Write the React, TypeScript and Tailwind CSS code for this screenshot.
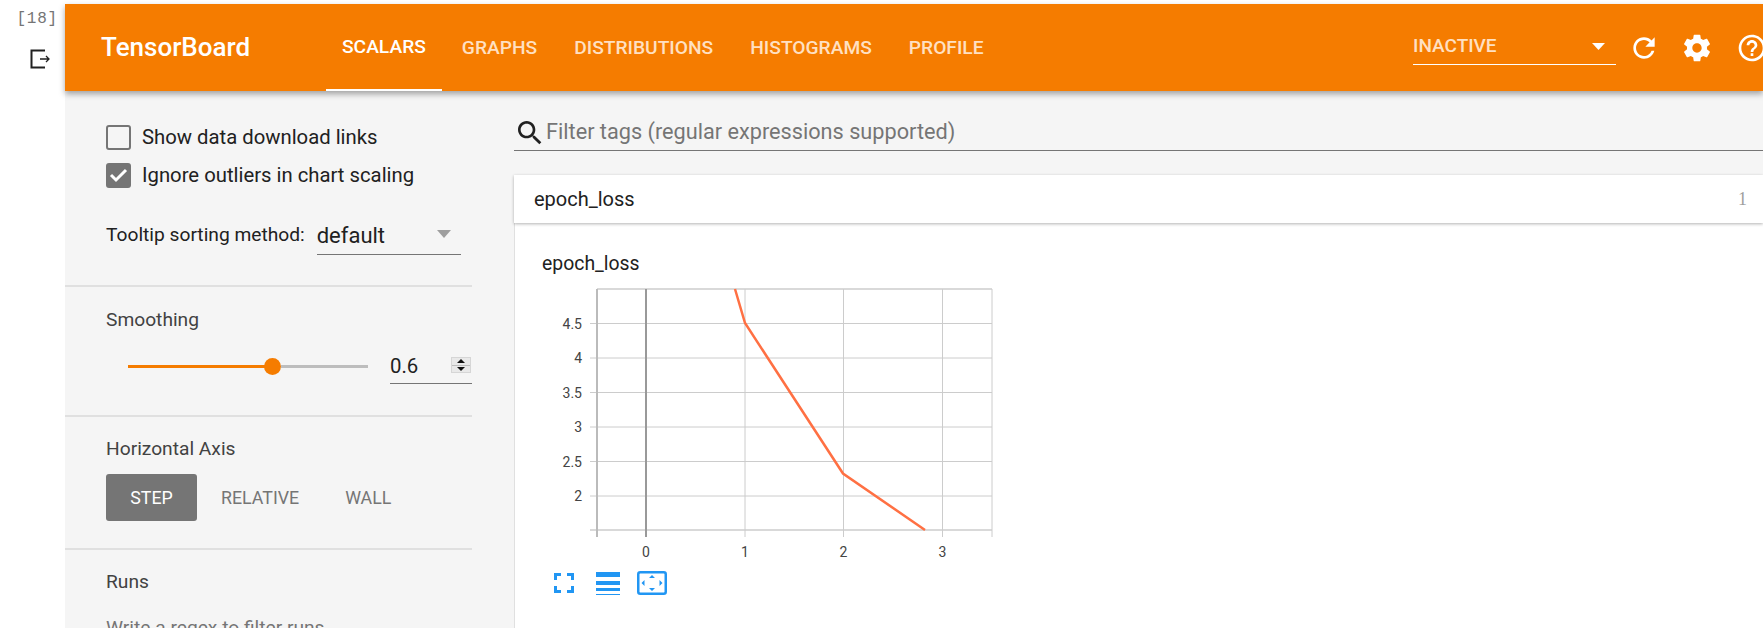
const font = { fontFamily: 'Roboto, sans-serif' };

const yTicks = [
  { label: '4.5', y: 323.5 },
  { label: '4', y: 358 },
  { label: '3.5', y: 392.5 },
  { label: '3', y: 427 },
  { label: '2.5', y: 461.5 },
  { label: '2', y: 496 },
];
const xTicks = [
  { label: '0', x: 646 },
  { label: '1', x: 745 },
  { label: '2', x: 843.5 },
  { label: '3', x: 942.5 },
];

const tabs = ['SCALARS', 'GRAPHS', 'DISTRIBUTIONS', 'HISTOGRAMS', 'PROFILE'];

// chart coordinates are page-like, shifted by the viewBox origin
const LossChart = () => (
  <svg width={460} height={280} viewBox="540 284 460 280" className="block ml-[25px]">
    <line x1={597} x2={992} y1={289} y2={289} stroke="#ccc" strokeWidth={1.5} />
    <line x1={590} x2={992} y1={530} y2={530} stroke="#ccc" strokeWidth={1.5} />
    {yTicks.map((t) => (
      <g key={t.label}>
        <line x1={590} x2={992} y1={t.y} y2={t.y} stroke="#ccc" strokeWidth={1} />
        <text x={582} y={t.y + 5} textAnchor="end" fontSize={14} fill="#444" fontFamily="Roboto">
          {t.label}
        </text>
      </g>
    ))}
    <line x1={597} x2={597} y1={289} y2={537} stroke="#bbb" strokeWidth={2} />
    <line x1={992} x2={992} y1={289} y2={537} stroke="#ccc" strokeWidth={1} />
    {xTicks.map((t) => (
      <g key={t.label}>
        <line x1={t.x} x2={t.x} y1={289} y2={537} stroke={t.x === 646 ? '#999' : '#ccc'} strokeWidth={t.x === 646 ? 2 : 1} />
        <text x={t.x} y={557} textAnchor="middle" fontSize={14} fill="#444" fontFamily="Roboto">
          {t.label}
        </text>
      </g>
    ))}
    <polyline points="735,289 745,323 843,473.5 925,530" fill="none" stroke="#ff7043" strokeWidth={2.5} />
  </svg>
);

const ChartTools = () => (
  <div className="flex items-center mt-[7px] ml-[39px] text-[#2196f3] h-[24px]">
    <svg width={20} height={20} viewBox="0 0 20 20" fill="none" stroke="currentColor" strokeWidth={3}>
      <path d="M1.5 7V1.5H7M13 1.5h5.5V7M18.500 13v5.500H13M7 18.500H1.500V13" />
    </svg>
    <svg width={24} height={23} viewBox="0 0 24 23" fill="currentColor" className="ml-[22px]">
      <rect x={0} y={0} width={24} height={5} />
      <rect x={0} y={9} width={24} height={4} />
      <rect x={0} y={16} width={24} height={3} />
      <rect x={0} y={22} width={24} height={1} />
    </svg>
    <svg width={30} height={24} viewBox="0 0 30 24" className="ml-[17px]">
      <rect x={1.25} y={1.25} width={27.5} height={21.5} rx={2} fill="none" stroke="currentColor" strokeWidth={2.5} />
      <path d="M15 4l3 3h-6zM15 20l-3-3h6zM4.500 12l3-3v6zM25.500 12l-3 3v-6z" fill="currentColor" />
    </svg>
  </div>
);

const Checkbox = ({ checked, label }: { checked?: boolean; label: string }) => (
  <div className="flex items-center h-[25px] gap-[11px]">
    {checked ? (
      <div className="w-[25px] h-[25px] rounded-[3px] bg-[#757575]">
        <svg width={25} height={25} viewBox="0 0 25 25" fill="none" stroke="#fff" strokeWidth={3}>
          <polyline points="5,12 10,17 20,7" />
        </svg>
      </div>
    ) : (
      <div className="w-[25px] h-[25px] rounded-[3px] border-2 border-[#757575]" />
    )}
    <span className="text-[20.3px] text-[#212121]">{label}</span>
  </div>
);

const Sidebar = () => (
  <aside className="w-[407px] shrink-0">
    <div className="h-[196px] border-b-2 border-[#e0e0e0] pl-[41px] pt-[34px]">
      <div className="flex flex-col gap-[13px]">
        <Checkbox label="Show data download links" />
        <Checkbox checked label="Ignore outliers in chart scaling" />
      </div>
      <div className="flex items-start mt-[29px]">
        <span className="text-[19.2px] text-[#212121] leading-[36px]">Tooltip sorting method:</span>
        <div className="ml-[12px] w-[144px] h-[38px] border-b border-[#757575] flex items-center justify-between pr-[10px]">
          <span className="text-[22px] text-[#212121]">default</span>
          <svg width={14} height={8} viewBox="0 0 14 8" className="mb-[4px]">
            <path d="M0 0h14L7 8z" fill="#9e9e9e" />
          </svg>
        </div>
      </div>
    </div>
    <div className="h-[130px] border-b-2 border-[#e0e0e0] pl-[41px] pt-[22px]">
      <div className="text-[19.2px] text-[#424242] leading-[22px]">Smoothing</div>
      <div className="flex items-center mt-[23px]">
        <div className="ml-[22px] w-[240px] flex items-center h-[20px]">
          <div className="w-[137px] h-[3px] bg-[#f57c00]" />
          <div className="w-[17px] h-[17px] rounded-full bg-[#f57c00] -ml-[1px] shrink-0" />
          <div className="flex-1 h-[3px] bg-[#bdbdbd]" />
        </div>
        <div className="ml-[22px] w-[82px] h-[30px] -mb-[5px] border-b border-[#757575] flex items-start justify-between pr-[1px]">
          <span className="text-[20.4px] text-[#212121] leading-[24px]">0.6</span>
          <div className="w-[20px] h-[16px] bg-[#e9e9e9] border border-[#d6d6d6] flex flex-col mt-[3px]">
            <div className="flex-1 flex items-center justify-center border-b border-[#bdbdbd]">
              <svg width={8} height={4} viewBox="0 0 8 4"><path d="M0 4h8L4 0z" fill="#111" /></svg>
            </div>
            <div className="flex-1 flex items-center justify-center">
              <svg width={8} height={4} viewBox="0 0 8 4"><path d="M0 0h8L4 4z" fill="#111" /></svg>
            </div>
          </div>
        </div>
      </div>
    </div>
    <div className="h-[133px] border-b-2 border-[#e0e0e0] pl-[41px] pt-[21px]">
      <div className="text-[19.2px] text-[#424242] leading-[22px]">Horizontal Axis</div>
      <div className="flex items-center mt-[14px] text-[17.8px]">
        <div className="w-[91px] h-[47px] rounded-[3px] bg-[#757575] text-[#fff] flex items-center justify-center pt-[1px]">STEP</div>
        <div className="ml-[24px] pt-[1px] text-[#757575]">RELATIVE</div>
        <div className="ml-[46px] pt-[1px] text-[#757575]">WALL</div>
      </div>
    </div>
    <div className="pl-[41px] pt-[21px]">
      <div className="text-[19.2px] text-[#424242] leading-[22px]">Runs</div>
      <div className="text-[19.2px] text-[#757575] leading-[22px] mt-[24px]">Write a regex to filter runs</div>
    </div>
  </aside>
);

export default function App() {
  return (
    <div className="flex h-[628px] w-[1763px] overflow-hidden bg-white" style={font}>
      <div className="w-[65px] shrink-0 pt-[9px]">
        <div className="text-[16px] leading-[20px] text-[#757575] text-right pr-[7px] tracking-[0.8px]" style={{ fontFamily: '"Liberation Mono", monospace' }}>
          [18]
        </div>
        <svg width={20} height={20} viewBox="0 0 20 20" fill="none" stroke="#212121" className="ml-[30px] mt-[20px]">
          <path d="M15 1.500H1.500v17H15" strokeWidth={2} />
          <path d="M10 10h9M16 7l3 3-3 3" strokeWidth={1.300} />
        </svg>
      </div>

      <div className="flex-1 min-w-0 flex flex-col pt-[4px]">
        <header className="relative z-10 h-[87px] shrink-0 bg-[#f57c00] flex items-center shadow-[0_3px_6px_rgba(0,0,0,0.35)] text-[#fff]">
          <div className="ml-[36px] w-[225px] text-[26px] font-medium">TensorBoard</div>
          <nav className="flex h-full">
            {tabs.map((tab, i) => (
              <div
                key={tab}
                className={
                  i === 0
                    ? 'flex items-center px-[16px] mr-[1.5px] pt-[1px] border-b-2 border-[#fff] text-[19.2px] font-medium'
                    : 'flex items-center px-[18.5px] pt-[1px] text-[19.2px] font-medium text-[#ffe0c2]'
                }
              >
                {tab}
              </div>
            ))}
          </nav>
          <div className="ml-auto flex items-center">
            <div className="w-[203px] h-[34px] border-b border-[#fff] flex justify-between items-start">
              <span className="text-[19px] font-medium text-[#ffe0c2] leading-[30px]">INACTIVE</span>
              <svg width={13} height={7} viewBox="0 0 13 7" className="mt-[12px] mr-[11px]">
                <path d="M0 0h13L6.500 7z" fill="#fff" />
              </svg>
            </div>
            <svg width={32} height={32} viewBox="0 0 24 24" fill="#fff" className="ml-[12px] shrink-0">
              <path d="M17.650 6.350C16.200 4.900 14.210 4 12 4c-4.420 0-7.990 3.580-7.990 8s3.570 8 7.990 8c3.730 0 6.840-2.550 7.730-6h-2.080c-.82 2.330-3.040 4-5.650 4-3.310 0-6-2.690-6-6s2.690-6 6-6c1.660 0 3.140.69 4.220 1.780L13 11h7V4l-2.350 2.350z" />
            </svg>
            <svg width={32} height={32} viewBox="0 0 24 24" fill="#fff" className="ml-[21px] shrink-0">
              <path d="M19.430 12.980c.04-.32.07-.64.07-.98s-.03-.66-.07-.98l2.110-1.650c.19-.15.24-.42.12-.64l-2-3.460c-.12-.22-.39-.3-.61-.22l-2.490 1c-.52-.4-1.080-.73-1.690-.98l-.38-2.650C14.460 2.180 14.250 2 14 2h-4c-.25 0-.46.18-.49.42l-.38 2.650c-.61.25-1.170.59-1.690.98l-2.490-1c-.23-.09-.49 0-.61.22l-2 3.460c-.13.22-.07.49.12.64l2.110 1.650c-.04.32-.07.65-.07.98s.03.66.07.98l-2.110 1.650c-.19.15-.24.42-.12.64l2 3.460c.12.22.39.3.61.22l2.490-1c.52.4 1.080.73 1.690.98l.38 2.650c.03.24.24.42.49.42h4c.25 0 .46-.18.49-.42l.38-2.650c.61-.25 1.170-.59 1.690-.98l2.490 1c.23.09.49 0 .61-.22l2-3.460c.12-.22.07-.49-.12-.64l-2.110-1.650zM12 15.500c-1.930 0-3.500-1.570-3.500-3.500s1.570-3.500 3.500-3.500 3.500 1.570 3.500 3.500-1.570 3.500-3.500 3.500z" />
            </svg>
            <svg width={32} height={32} viewBox="0 0 24 24" fill="#fff" className="ml-[23px] -mr-[5px] shrink-0">
              <path d="M11 18h2v-2h-2v2zm1-16C6.480 2 2 6.480 2 12s4.480 10 10 10 10-4.480 10-10S17.520 2 12 2zm0 18c-4.410 0-8-3.590-8-8s3.590-8 8-8 8 3.590 8 8-3.590 8-8 8zm0-14c-2.210 0-4 1.790-4 4h2c0-1.100.9-2 2-2s2 .9 2 2c0 2-3 1.750-3 5h2c0-2.250 3-2.500 3-5 0-2.210-1.790-4-4-4z" />
            </svg>
          </div>
        </header>

        <div className="flex flex-1 min-h-0 bg-[#f5f5f5]">
          <Sidebar />
          <main className="flex-1 min-w-0 ml-[42px] flex flex-col">
            <div className="h-[60px] shrink-0 border-b border-[#757575] flex items-center pt-[24px]">
              <svg width={32} height={32} viewBox="0 0 24 24" fill="#212121" className="shrink-0">
                <path d="M15.500 14h-.79l-.28-.27C15.410 12.590 16 11.110 16 9.500 16 5.910 13.090 3 9.500 3S3 5.910 3 9.500 5.910 16 9.500 16c1.610 0 3.090-.59 4.230-1.570l.27.28v.79l5 4.990L20.490 19l-4.990-5zm-6 0C7.010 14 5 11.990 5 9.500S7.010 5 9.500 5 14 7.010 14 9.500 11.990 14 9.500 14z" />
              </svg>
              <span className="text-[21.7px] text-[#757575]">Filter tags (regular expressions supported)</span>
            </div>
            <div className="h-[48px] mt-[24px] shrink-0 bg-white flex items-center justify-between pl-[20px] pr-[16px] shadow-[0_1px_3px_rgba(0,0,0,0.3)] relative">
              <span className="text-[20px] text-[#212121]">epoch_loss</span>
              <span className="text-[18px] text-[#9e9e9e]" style={{ fontFamily: '"Liberation Serif", serif' }}>1</span>
            </div>
            <section className="flex-1 bg-white border-l border-[#e0e0e0] pt-[30px]">
              <div className="text-[19.4px] text-[#212121] leading-[22px] ml-[27px] mb-[9px]">epoch_loss</div>
              <LossChart />
              <ChartTools />
            </section>
          </main>
        </div>
      </div>
    </div>
  );
}
